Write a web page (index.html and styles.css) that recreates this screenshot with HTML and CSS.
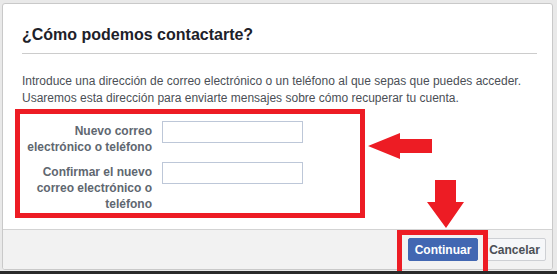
FILE: index.html
```html
<!DOCTYPE html>
<html lang="es">
<head>
  <meta charset="UTF-8">
  <title>¿Cómo podemos contactarte?</title>
  <link rel="stylesheet" href="styles.css">
</head>
<body>

  <div class="dialog">
    <div class="dialog-head">
      <h2>¿Cómo podemos contactarte?</h2>
    </div>

    <div class="dialog-body">
      <p class="intro">Introduce una dirección de correo electrónico o un teléfono al que sepas que puedes acceder. Usaremos esta dirección para enviarte mensajes sobre cómo recuperar tu cuenta.</p>

      <div class="form-box">
        <div class="row">
          <label for="new-contact">Nuevo correo electrónico o teléfono</label>
          <input type="text" id="new-contact">
        </div>
        <div class="row">
          <label for="confirm-contact">Confirmar el nuevo correo electrónico o teléfono</label>
          <input type="text" id="confirm-contact">
        </div>
      </div>
    </div>

    <div class="dialog-foot">
      <button class="btn btn-primary">Continuar</button>
      <button class="btn">Cancelar</button>
    </div>
  </div>

  <!-- marcas rojas encima de la captura -->
  <svg class="marks" width="557" height="274" viewBox="0 0 557 274">
    <polygon points="368,146 400,133 400,139 432,139 432,153 400,153 400,159" />
    <polygon points="435,180 456,180 456,202 464,202 446,228 427,202 435,202" />
    <rect x="399.5" y="232.5" width="86" height="50" />
  </svg>

</body>
</html>
```

FILE: styles.css
```css
* {
  box-sizing: border-box;
}

body {
  margin: 0;
  height: 274px;
  padding: 3px 4px 0 2px;
  background-color: #e9e9e9;
  border-bottom: 3px solid #2a2a2a;
  font-family: "Liberation Sans", Arial, sans-serif;
  overflow: hidden;
  position: relative;
}

.dialog {
  display: flex;
  flex-direction: column;
  height: 267px;
  background-color: #fff;
  border: 1px solid #c9c9c9;
  border-radius: 3px;
  overflow: hidden;
}

.dialog-head {
  margin: 0 15px 0 19px;
  padding: 21px 0 8px;
  border-bottom: 1px solid #cccccc;
}

.dialog-head h2 {
  margin: 0;
  font-size: 16px;
  line-height: 20px;
  font-weight: bold;
  color: #1d2129;
}

.dialog-body {
  padding: 19px 0 11px;
}

.intro {
  margin: 0 0 2px 19px;
  font-size: 12px;
  line-height: 17px;
  color: #4b4f56;
}

.form-box {
  width: 350px;
  height: 109px;
  margin-left: 12px;
  padding-top: 7px;
  border: 5px solid #ed1c24;
}

.row {
  display: flex;
  gap: 10px;
  margin-bottom: 7px;
}

.row label {
  width: 132px;
  padding-top: 2px;
  text-align: right;
  font-size: 12px;
  line-height: 16px;
  font-weight: bold;
  color: #606770;
}

.row input {
  width: 141px;
  height: 22px;
  margin: 0;
  padding: 0 4px;
  border: 1px solid #bdc7d8;
  font-family: inherit;
  font-size: 12px;
}

.dialog-foot {
  flex: 1;
  display: flex;
  justify-content: flex-end;
  align-items: flex-start;
  gap: 5px;
  padding: 8px 6px 0 0;
  background-color: #f2f2f2;
  border-top: 1px solid #d3d3d3;
}

.btn {
  width: 63px;
  height: 23px;
  padding: 0;
  border: 1px solid #ced0d4;
  border-radius: 2px;
  background-color: #f6f7f9;
  color: #4b4f56;
  font-family: inherit;
  font-size: 12px;
  font-weight: bold;
}

.btn-primary {
  width: 70px;
  background-color: #4267b2;
  border-color: #4267b2;
  color: #fff;
}

.marks {
  position: absolute;
  top: 0;
  left: 0;
  pointer-events: none;
}

.marks polygon {
  fill: #ed1c24;
}

.marks rect {
  fill: none;
  stroke: #ed1c24;
  stroke-width: 5;
}
```
